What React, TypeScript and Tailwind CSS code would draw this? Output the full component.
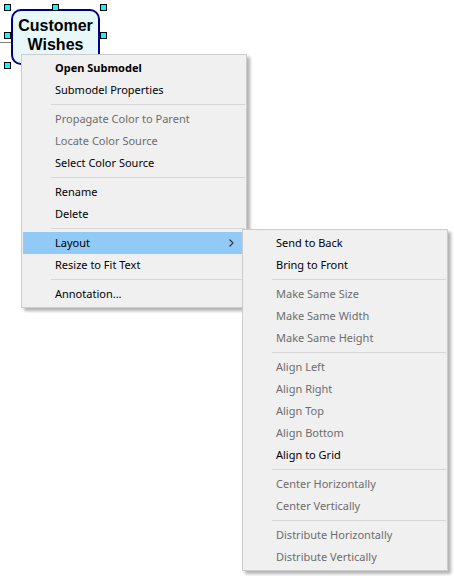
import React from "react";

type Item = { label: string; bold?: boolean; disabled?: boolean; sub?: boolean; active?: boolean } | "sep";

const mainItems: Item[] = [
  { label: "Open Submodel", bold: true },
  { label: "Submodel Properties" },
  "sep",
  { label: "Propagate Color to Parent", disabled: true },
  { label: "Locate Color Source", disabled: true },
  { label: "Select Color Source" },
  "sep",
  { label: "Rename" },
  { label: "Delete" },
  "sep",
  { label: "Layout", sub: true, active: true },
  { label: "Resize to Fit Text" },
  "sep",
  { label: "Annotation..." },
];

const layoutItems: Item[] = [
  { label: "Send to Back" },
  { label: "Bring to Front" },
  "sep",
  { label: "Make Same Size", disabled: true },
  { label: "Make Same Width", disabled: true },
  { label: "Make Same Height", disabled: true },
  "sep",
  { label: "Align Left", disabled: true },
  { label: "Align Right", disabled: true },
  { label: "Align Top", disabled: true },
  { label: "Align Bottom", disabled: true },
  { label: "Align to Grid" },
  "sep",
  { label: "Center Horizontally", disabled: true },
  { label: "Center Vertically", disabled: true },
  "sep",
  { label: "Distribute Horizontally", disabled: true },
  { label: "Distribute Vertically", disabled: true },
];

function Menu({ items, className }: { items: Item[]; className: string }) {
  return (
    <div
      className={`absolute flex flex-col border border-[#cccccc] bg-[#f0f0f0] px-[1px] py-[2px] shadow-[3px_3px_3px_rgba(0,0,0,0.3)] ${className}`}
    >
      {items.map((item, i) =>
        item === "sep" ? (
          <div key={i} className="flex h-[7px] items-center pl-[28px]">
            <div className="h-px w-full bg-[#d7d7d7]" />
          </div>
        ) : (
          <div
            key={i}
            className={`flex h-[22px] items-center justify-between pl-[32px] pr-[11px] ${
              item.active ? "bg-[#91c9f7]" : ""
            } ${item.bold ? "font-bold" : ""} ${
              item.disabled ? "text-[#6d6d6d]" : "text-black"
            }`}
          >
            <span>{item.label}</span>
            {item.sub && (
              <svg width="5" height="8" viewBox="0 0 5 8" className="text-[#333]">
                <path d="M0.5 0.5 L4 4 L0.5 7.5" fill="none" stroke="currentColor" strokeWidth="1.1" />
              </svg>
            )}
          </div>
        )
      )}
    </div>
  );
}

function Handle({ className }: { className: string }) {
  return <div className={`absolute h-[7px] w-[7px] border border-black bg-[#00ffff] ${className}`} />;
}

export default function App() {
  return (
    <div className="relative h-[576px] w-[454px] overflow-hidden bg-white font-['Noto_Sans',sans-serif] text-[11px]">
      {/* connector stub */}
      <div className="absolute left-0 top-[42px] h-px w-[12px] bg-[#808080]" />

      {/* selected node */}
      <div className="absolute left-[11px] top-[9px] flex h-[56px] w-[89px] flex-col items-center rounded-[10px] border-2 border-[#000080] bg-[#e8f8f8] pt-[5px] font-['Liberation_Sans',Arial,sans-serif] text-[16px] font-bold leading-[19px] text-black">
        <span>Customer</span>
        <span>Wishes</span>
      </div>

      <Handle className="left-[4px] top-[4px]" />
      <Handle className="left-[52px] top-[4px]" />
      <Handle className="left-[100px] top-[4px]" />
      <Handle className="left-[4px] top-[32px]" />
      <Handle className="left-[100px] top-[32px]" />
      <Handle className="left-[4px] top-[62px]" />

      <Menu items={mainItems} className="left-[21px] top-[54px] w-[226px]" />
      <Menu items={layoutItems} className="left-[242px] top-[229px] w-[206px]" />
    </div>
  );
}
